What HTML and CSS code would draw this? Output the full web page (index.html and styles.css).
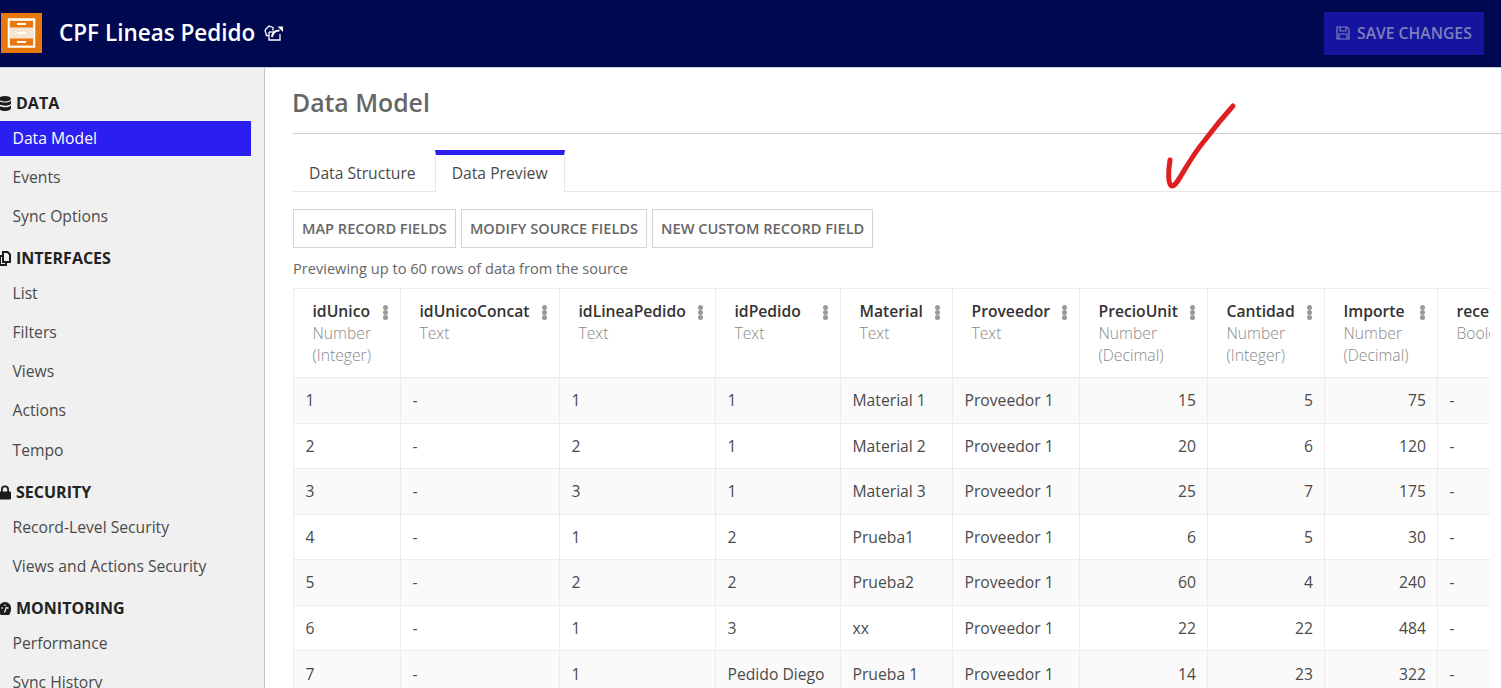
FILE: index.html
```html
<!DOCTYPE html>
<html lang="en">

<head>
  <meta charset="UTF-8">
  <meta name="viewport" content="width=device-width, initial-scale=1.0">
  <title>CPF Lineas Pedido</title>
  <link rel="stylesheet" href="styles.css">
</head>

<body>
  <header class="topbar">
    <div class="logo">
      <svg width="41" height="40" viewBox="0 0 41 40">
        <rect width="41" height="40" fill="#e8780c" />
        <rect x="7.500" y="6" width="26" height="28" fill="#f5e4d0" stroke="#fff" stroke-width="1.500" />
        <rect x="9" y="8" width="23" height="6.500" fill="#e8780c" />
        <rect x="9" y="25.500" width="23" height="7" fill="#e8780c" />
        <rect x="16" y="10" width="9" height="2" fill="#fff" />
        <rect x="16" y="19" width="9" height="2" fill="#fff" />
        <rect x="16" y="28" width="9" height="2" fill="#fff" />
      </svg>
    </div>
    <h1 class="app-title">CPF Lineas Pedido</h1>
    <svg class="edit-icon" width="20" height="16" viewBox="0 0 20 16" fill="none" stroke="#fff" stroke-width="1.300">
      <path d="M2 5l4-4 4 1.500v3" />
      <path d="M2 5l1.500 5.500H6" />
      <path d="M6 7h5" />
      <path d="M6 7v8h11V9" />
      <path d="M9 12c.5-4 3.500-6.500 7.500-6.500" stroke-width="2" />
      <path d="M14.500 1.500H20V7z" fill="#fff" stroke="none" />
    </svg>
    <button class="save-button">
      <svg width="14" height="14" viewBox="0 0 14 14" fill="none" stroke="#7d7fbd" stroke-width="1.200">
        <path d="M1 1h10l2 2v10H1z" />
        <path d="M4 1v4h6V1M3 13V8h8v5" />
      </svg>
      SAVE CHANGES
    </button>
  </header>

  <div class="layout">
    <nav class="sidebar">
      <div class="nav-head">
        <svg class="nav-icon" width="12" height="15" viewBox="0 0 12 15" fill="#1c1c1c">
          <ellipse cx="6" cy="2.800" rx="6" ry="2.800" />
          <path d="M0 4.600c1 1.400 3.500 2 6 2s5-.6 6-2v2.600c0 1.400-2.700 2.500-6 2.500S0 8.600 0 7.200z" />
          <path d="M0 9.300c1 1.400 3.500 2 6 2s5-.6 6-2v2.900c0 1.500-2.700 2.800-6 2.800s-6-1.300-6-2.800z" />
        </svg>
        DATA
      </div>
      <a class="nav-item active">Data Model</a>
      <a class="nav-item">Events</a>
      <a class="nav-item">Sync Options</a>

      <div class="nav-head">
        <svg class="nav-icon" width="12" height="15" viewBox="0 0 12 15" fill="none" stroke="#1c1c1c" stroke-width="2">
          <path d="M4 1h4.500L11 3.500V11H4z" />
          <path d="M4 5H1v9h6v-3" />
        </svg>
        INTERFACES
      </div>
      <a class="nav-item">List</a>
      <a class="nav-item">Filters</a>
      <a class="nav-item">Views</a>
      <a class="nav-item">Actions</a>
      <a class="nav-item">Tempo</a>

      <div class="nav-head">
        <svg class="nav-icon" width="12" height="15" viewBox="0 0 12 15" fill="#1c1c1c">
          <path d="M2 7V4.500a4 4 0 0 1 8 0V7H8.200V4.500a2.200 2.200 0 0 0-4.400 0V7z" />
          <rect x="0" y="6.500" width="12" height="8" rx="1" />
        </svg>
        SECURITY
      </div>
      <a class="nav-item">Record-Level Security</a>
      <a class="nav-item">Views and Actions Security</a>

      <div class="nav-head">
        <svg class="nav-icon" width="12" height="15" viewBox="0 0 12 15">
          <path d="M6 1a6 6 0 0 1 6 6.500c0 2.500-.7 4.800-1.800 6.500H1.800C.7 12.300 0 10 0 7.500A6 6 0 0 1 6 1z" fill="#1c1c1c" />
          <path d="M2.500 7h1.500M8 7h1.500M6 3.500v1.500M5.500 11.500L7.500 6" stroke="#f0f0f0" stroke-width="1.300" />
        </svg>
        MONITORING
      </div>
      <a class="nav-item">Performance</a>
      <a class="nav-item">Sync History</a>
    </nav>

    <main class="content">
      <h2 class="page-title">Data Model</h2>

      <div class="tabs">
        <a class="tab">Data Structure</a>
        <a class="tab active">Data Preview</a>
      </div>

      <div class="actions">
        <button class="button">MAP RECORD FIELDS</button>
        <button class="button">MODIFY SOURCE FIELDS</button>
        <button class="button">NEW CUSTOM RECORD FIELD</button>
      </div>

      <p class="hint">Previewing up to 60 rows of data from the source</p>

      <div class="table-wrap">
        <table class="preview">
          <colgroup>
            <col class="c1"><col class="c2"><col class="c3"><col class="c4"><col class="c5">
            <col class="c6"><col class="c7"><col class="c8"><col class="c9"><col class="c10">
          </colgroup>
          <thead>
            <tr>
              <th><div class="th-box"><div><b>idUnico</b><span>Number (Integer)</span></div><i class="dots"></i></div></th>
              <th><div class="th-box"><div><b>idUnicoConcat</b><span>Text</span></div><i class="dots"></i></div></th>
              <th><div class="th-box"><div><b>idLineaPedido</b><span>Text</span></div><i class="dots"></i></div></th>
              <th><div class="th-box"><div><b>idPedido</b><span>Text</span></div><i class="dots"></i></div></th>
              <th><div class="th-box"><div><b>Material</b><span>Text</span></div><i class="dots"></i></div></th>
              <th><div class="th-box"><div><b>Proveedor</b><span>Text</span></div><i class="dots"></i></div></th>
              <th><div class="th-box"><div><b>PrecioUnit</b><span>Number (Decimal)</span></div><i class="dots"></i></div></th>
              <th><div class="th-box"><div><b>Cantidad</b><span>Number (Integer)</span></div><i class="dots"></i></div></th>
              <th><div class="th-box"><div><b>Importe</b><span>Number (Decimal)</span></div><i class="dots"></i></div></th>
              <th><div class="th-box"><div><b>recepcionado</b><span>Boolean</span></div></div></th>
            </tr>
          </thead>
          <tbody>
            <tr><td>1</td><td>-</td><td>1</td><td>1</td><td>Material 1</td><td>Proveedor 1</td><td class="num">15</td><td class="num">5</td><td class="num">75</td><td>-</td></tr>
            <tr><td>2</td><td>-</td><td>2</td><td>1</td><td>Material 2</td><td>Proveedor 1</td><td class="num">20</td><td class="num">6</td><td class="num">120</td><td>-</td></tr>
            <tr><td>3</td><td>-</td><td>3</td><td>1</td><td>Material 3</td><td>Proveedor 1</td><td class="num">25</td><td class="num">7</td><td class="num">175</td><td>-</td></tr>
            <tr><td>4</td><td>-</td><td>1</td><td>2</td><td>Prueba1</td><td>Proveedor 1</td><td class="num">6</td><td class="num">5</td><td class="num">30</td><td>-</td></tr>
            <tr><td>5</td><td>-</td><td>2</td><td>2</td><td>Prueba2</td><td>Proveedor 1</td><td class="num">60</td><td class="num">4</td><td class="num">240</td><td>-</td></tr>
            <tr><td>6</td><td>-</td><td>1</td><td>3</td><td>xx</td><td>Proveedor 1</td><td class="num">22</td><td class="num">22</td><td class="num">484</td><td>-</td></tr>
            <tr><td>7</td><td>-</td><td>1</td><td>Pedido Diego</td><td>Prueba 1</td><td>Proveedor 1</td><td class="num">14</td><td class="num">23</td><td class="num">322</td><td>-</td></tr>
          </tbody>
        </table>
      </div>
    </main>
  </div>

  <!-- hand drawn check mark on top of the screenshot -->
  <svg class="check-mark" width="80" height="95" viewBox="0 0 80 95" fill="none">
    <path d="M6 60C4 72 4 86 8 86C14 86 21 64 41 40C50 28 60 16 69 6" stroke="#e02020" stroke-width="5" stroke-linecap="round" stroke-linejoin="round" />
  </svg>
</body>

</html>
```

FILE: styles.css
```css
html,
body {
  margin: 0;
  height: 688px;
  overflow: hidden;
  background: #fff;
  font-family: "Open Sans", sans-serif;
  font-size: 15.700px;
  color: #4a4a4a;
}

.topbar {
  display: flex;
  align-items: center;
  height: 68px;
  background-color: #00084f;
  border-bottom: 1px solid #c9cbdb;
  box-sizing: border-box;
}

.logo {
  display: flex;
  margin-left: 1px;
  margin-top: -1px;
}

.app-title {
  margin: -2px 0 0 17px;
  font-size: 22.500px;
  font-weight: 600;
  color: #fff;
}

.edit-icon {
  margin-left: 8px;
  margin-top: -1px;
}

.save-button {
  display: flex;
  align-items: center;
  gap: 7px;
  margin-left: auto;
  margin-right: 17px;
  height: 43px;
  width: 160px;
  padding: 0 12px 2px;
  border: none;
  background-color: #14149e;
  color: #7d7fbd;
  font-family: inherit;
  font-size: 15.700px;
  font-weight: 600;
  white-space: nowrap;
}

.layout {
  display: flex;
  height: 620px;
}

.sidebar {
  flex: none;
  width: 265px;
  height: 100%;
  box-sizing: border-box;
  padding-top: 10.500px;
  padding-right: 13px;
  background-color: #f0f0f0;
  border-right: 1px solid #c4c4c4;
  overflow: hidden;
}

.nav-head {
  display: flex;
  align-items: center;
  gap: 5px;
  height: 24px;
  box-sizing: border-box;
  padding-bottom: 1px;
  margin-top: 13px;
  margin-bottom: 5px;
  font-size: 16px;
  font-weight: 700;
  color: #222;
}

.nav-icon {
  flex: none;
  margin-left: -1px;
}

.nav-item {
  display: block;
  height: 35px;
  line-height: 35px;
  margin-bottom: 4.200px;
  padding-left: 12.500px;
  color: #4a4a4a;
}

.nav-item.active {
  background-color: #2a1ef0;
  color: #fff;
}

.content {
  flex: 1;
  min-width: 0;
  padding-left: 28px;
}

.page-title {
  margin: 0;
  height: 66px;
  box-sizing: border-box;
  padding-top: 16px;
  font-size: 24.800px;
  font-weight: 600;
  line-height: 37px;
  color: #666;
  border-bottom: 1px solid #ccc;
  text-indent: -1px;
}

.tabs {
  display: flex;
  margin-top: 16px;
  height: 42px;
  box-sizing: border-box;
  border-bottom: 1px solid #e8e8e8;
}

.tab {
  padding: 12px 19px 0 16px;
  line-height: 23px;
  color: #4a4a4a;
}

.tab.active {
  height: 42px;
  box-sizing: border-box;
  background-color: #fff;
  border: 1px solid #e8e8e8;
  border-top: 5px solid #2a1ef0;
  border-bottom: none;
  padding: 7px 16px 0;
}

.actions {
  display: flex;
  gap: 5px;
  margin-top: 17px;
}

.button {
  height: 39px;
  padding: 0 8px 2px;
  background-color: #fff;
  border: 1px solid #d4d4d4;
  font-family: inherit;
  font-size: 14.600px;
  font-weight: 600;
  color: #666;
  white-space: nowrap;
}

.hint {
  margin: 10px 0 9px 0;
  font-size: 14.600px;
  line-height: 21px;
  color: #666;
}

.table-wrap {
  width: 1197px;
  overflow: hidden;
}

.preview {
  table-layout: fixed;
  border-collapse: collapse;
  width: 1300px;
}

.c1 { width: 107px; }
.c2 { width: 159px; }
.c3 { width: 156px; }
.c4 { width: 125px; }
.c5 { width: 112px; }
.c6 { width: 127px; }
.c7 { width: 128px; }
.c8 { width: 117px; }
.c9 { width: 113px; }
.c10 { width: 156px; }

.preview th {
  height: 88px;
  padding: 0 0 0 18.500px;
  vertical-align: top;
  text-align: left;
  border: 1px solid #ececec;
  font-weight: 400;
}

.th-box {
  display: flex;
  justify-content: space-between;
  padding-top: 11px;
  padding-right: 12.500px;
}

.th-box b {
  display: block;
  font-weight: 600;
  line-height: 22px;
  color: #333;
  white-space: nowrap;
}

.th-box span {
  display: block;
  font-weight: 300;
  line-height: 22px;
  color: #888;
}

.dots {
  flex: none;
  width: 5px;
  height: 5px;
  margin-top: 5px;
  border-radius: 50%;
  background-color: #999;
  box-shadow: 0 5px 0 #999, 0 10px 0 #999;
}

.preview td {
  height: 44.550px;
  padding: 0 11px 0 11.500px;
  border: 1px solid #ececec;
  color: #4a4a4a;
  white-space: nowrap;
  overflow: hidden;
}

.preview td.num {
  text-align: right;
}

.preview tbody tr:nth-child(odd) {
  background-color: #fafafa;
}

.check-mark {
  position: absolute;
  left: 1164px;
  top: 100px;
}
```
